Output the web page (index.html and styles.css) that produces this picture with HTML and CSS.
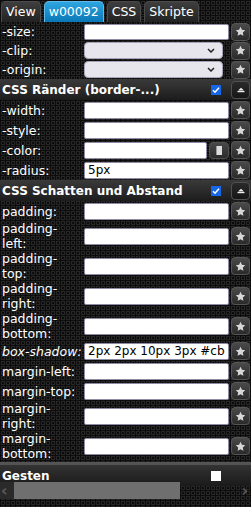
FILE: index.html
```html
<!DOCTYPE html>
<html lang="de">
<head>
<meta charset="utf-8">
<title>Editor</title>
<link rel="stylesheet" href="styles.css">
</head>
<body>
<nav class="tabs">
  <span class="tab">View</span>
  <span class="tab active">w00092</span>
  <span class="tab">CSS</span>
  <span class="tab">Skripte</span>
</nav>

<section class="group">
  <div class="row tight"><label>-size:</label><input type="text"><button class="star"><svg viewBox="0 0 12 12"><path d="M6 .8l1.55 3.3 3.6.45-2.65 2.5.68 3.57L6 8.9 2.82 10.62l.68-3.57L.85 4.55l3.6-.45z"/></svg></button></div>
  <div class="row tight"><label>-clip:</label><div class="sel"><select><option></option></select><svg viewBox="0 0 8 5"><path d="M1 1l3 3 3-3"/></svg></div><button class="star"><svg viewBox="0 0 12 12"><path d="M6 .8l1.55 3.3 3.6.45-2.65 2.5.68 3.57L6 8.9 2.82 10.62l.68-3.57L.85 4.55l3.6-.45z"/></svg></button></div>
  <div class="row tight"><label>-origin:</label><div class="sel"><select><option></option></select><svg viewBox="0 0 8 5"><path d="M1 1l3 3 3-3"/></svg></div><button class="star"><svg viewBox="0 0 12 12"><path d="M6 .8l1.55 3.3 3.6.45-2.65 2.5.68 3.57L6 8.9 2.82 10.62l.68-3.57L.85 4.55l3.6-.45z"/></svg></button></div>
</section>

<header class="head">
  <span class="title">CSS Ränder (border-...)</span>
  <span class="check on"><svg viewBox="0 0 10 10"><path d="M2 5.2l2 2 4-4.4"/></svg></span>
  <button class="fold"><svg viewBox="0 0 10 8"><path d="M2 4.5L5 1.8 8 4.5z"/><rect x="1.5" y="5" width="7" height="1.2"/></svg></button>
</header>
<section class="group">
  <div class="row"><label>-width:</label><input type="text"><button class="star"><svg viewBox="0 0 12 12"><path d="M6 .8l1.55 3.3 3.6.45-2.65 2.5.68 3.57L6 8.9 2.82 10.62l.68-3.57L.85 4.55l3.6-.45z"/></svg></button></div>
  <div class="row"><label>-style:</label><input type="text"><button class="star"><svg viewBox="0 0 12 12"><path d="M6 .8l1.55 3.3 3.6.45-2.65 2.5.68 3.57L6 8.9 2.82 10.62l.68-3.57L.85 4.55l3.6-.45z"/></svg></button></div>
  <div class="row"><label>-color:</label><div class="colorpair"><input type="text"><button class="pick"><span class="swatch"></span></button></div><button class="star"><svg viewBox="0 0 12 12"><path d="M6 .8l1.55 3.3 3.6.45-2.65 2.5.68 3.57L6 8.9 2.82 10.62l.68-3.57L.85 4.55l3.6-.45z"/></svg></button></div>
  <div class="row"><label>-radius:</label><input type="text" value="5px"><button class="star"><svg viewBox="0 0 12 12"><path d="M6 .8l1.55 3.3 3.6.45-2.65 2.5.68 3.57L6 8.9 2.82 10.62l.68-3.57L.85 4.55l3.6-.45z"/></svg></button></div>
</section>

<header class="head">
  <span class="title">CSS Schatten und Abstand</span>
  <span class="check on"><svg viewBox="0 0 10 10"><path d="M2 5.2l2 2 4-4.4"/></svg></span>
  <button class="fold"><svg viewBox="0 0 10 8"><path d="M2 4.5L5 1.8 8 4.5z"/><rect x="1.5" y="5" width="7" height="1.2"/></svg></button>
</header>
<section class="group">
  <div class="row"><label>padding:</label><input type="text"><button class="star"><svg viewBox="0 0 12 12"><path d="M6 .8l1.55 3.3 3.6.45-2.65 2.5.68 3.57L6 8.9 2.82 10.62l.68-3.57L.85 4.55l3.6-.45z"/></svg></button></div>
  <div class="row two"><label>padding-<br>left:</label><input type="text"><button class="star"><svg viewBox="0 0 12 12"><path d="M6 .8l1.55 3.3 3.6.45-2.65 2.5.68 3.57L6 8.9 2.82 10.62l.68-3.57L.85 4.55l3.6-.45z"/></svg></button></div>
  <div class="row two"><label>padding-<br>top:</label><input type="text"><button class="star"><svg viewBox="0 0 12 12"><path d="M6 .8l1.55 3.3 3.6.45-2.65 2.5.68 3.57L6 8.9 2.82 10.62l.68-3.57L.85 4.55l3.6-.45z"/></svg></button></div>
  <div class="row two"><label>padding-<br>right:</label><input type="text"><button class="star"><svg viewBox="0 0 12 12"><path d="M6 .8l1.55 3.3 3.6.45-2.65 2.5.68 3.57L6 8.9 2.82 10.62l.68-3.57L.85 4.55l3.6-.45z"/></svg></button></div>
  <div class="row two"><label>padding-<br>bottom:</label><input type="text"><button class="star"><svg viewBox="0 0 12 12"><path d="M6 .8l1.55 3.3 3.6.45-2.65 2.5.68 3.57L6 8.9 2.82 10.62l.68-3.57L.85 4.55l3.6-.45z"/></svg></button></div>
  <div class="row"><label class="em">box-shadow:</label><input type="text" value="2px 2px 10px 3px #cbcbcb"><button class="star"><svg viewBox="0 0 12 12"><path d="M6 .8l1.55 3.3 3.6.45-2.65 2.5.68 3.57L6 8.9 2.82 10.62l.68-3.57L.85 4.55l3.6-.45z"/></svg></button></div>
  <div class="row"><label>margin-left:</label><input type="text"><button class="star"><svg viewBox="0 0 12 12"><path d="M6 .8l1.55 3.3 3.6.45-2.65 2.5.68 3.57L6 8.9 2.82 10.62l.68-3.57L.85 4.55l3.6-.45z"/></svg></button></div>
  <div class="row"><label>margin-top:</label><input type="text"><button class="star"><svg viewBox="0 0 12 12"><path d="M6 .8l1.55 3.3 3.6.45-2.65 2.5.68 3.57L6 8.9 2.82 10.62l.68-3.57L.85 4.55l3.6-.45z"/></svg></button></div>
  <div class="row two"><label>margin-<br>right:</label><input type="text"><button class="star"><svg viewBox="0 0 12 12"><path d="M6 .8l1.55 3.3 3.6.45-2.65 2.5.68 3.57L6 8.9 2.82 10.62l.68-3.57L.85 4.55l3.6-.45z"/></svg></button></div>
  <div class="row two"><label>margin-<br>bottom:</label><input type="text"><button class="star"><svg viewBox="0 0 12 12"><path d="M6 .8l1.55 3.3 3.6.45-2.65 2.5.68 3.57L6 8.9 2.82 10.62l.68-3.57L.85 4.55l3.6-.45z"/></svg></button></div>
</section>

<div class="sep"></div>
<header class="head last">
  <span class="title">Gesten</span>
  <span class="check off"></span>
  <span class="fold-space"></span>
</header>

<div class="hscroll">
  <span class="arrow left">‹</span>
  <span class="thumb"></span>
  <span class="arrow right">›</span>
</div>
</body>
</html>
```

FILE: styles.css
```css
html, body {
  margin: 0;
  padding: 0;
}
body {
  width: 251px;
  height: 507px;
  overflow: hidden;
  position: relative;
  font-family: "DejaVu Sans", Verdana, sans-serif;
  font-size: 12.5px;
  color: #fff;
  background-color: #0b0b0b;
  background-image: radial-gradient(circle at 3px 3px, transparent 1.1px, #262626 1.5px, #262626 2.2px, transparent 2.6px);
  background-size: 5px 5px;
}

/* tabs */
.tabs {
  display: flex;
  gap: 3px;
  height: 22px;
  padding: 1px 0 0 1px;
  box-sizing: border-box;
}
.tab {
  height: 21px;
  line-height: 20px;
  padding: 0 4px;
  border: 1px solid #4a4a4a;
  border-bottom: none;
  border-radius: 5px 5px 0 0;
  background: linear-gradient(#3e3e3e, #222);
  color: #fff;
  font-size: 12.5px;
  box-sizing: border-box;
}
.tab.active {
  background: linear-gradient(#2ea6e0, #0a77b6);
  border-color: #62b8e6;
}

/* rows */
.row {
  display: grid;
  grid-template-columns: 82px 1fr 19px;
  column-gap: 2px;
  align-items: center;
  height: 20px;
  padding-right: 1px;
}
.row.tight { height: 19px; }
.row.two { height: 30px; }
.row label {
  padding-left: 2px;
  white-space: nowrap;
  line-height: 15px;
}
.row label.em { font-style: italic; }

input[type="text"] {
  height: 17px;
  box-sizing: border-box;
  width: 100%;
  margin: 0;
  border: 1px solid #8e8ca4;
  border-radius: 2px;
  background: #fff;
  padding: 0 3px;
  font-family: "DejaVu Sans", Verdana, sans-serif;
  font-size: 12px;
  color: #000;
  outline: none;
}
.row.tight input[type="text"] { height: 16px; }

.sel {
  position: relative;
  margin-right: 6px;
  height: 17px;
}
.sel select {
  appearance: none;
  -webkit-appearance: none;
  width: 100%;
  height: 17px;
  margin: 0;
  border: 1px solid #a6a4b6;
  border-radius: 4px;
  background: #e7e6ec;
  font-size: 12px;
}
.sel svg {
  position: absolute;
  right: 8px;
  top: 6px;
  width: 8px;
  height: 5px;
  fill: none;
  stroke: #222;
  stroke-width: 1.5;
}

.colorpair {
  display: flex;
  gap: 2px;
  align-items: center;
}
.colorpair input[type="text"] { flex: 1; min-width: 0; }
.pick {
  width: 20px;
  height: 17px;
  flex: none;
  margin: 0;
  padding: 0;
  border: 1px solid #505050;
  border-radius: 4px;
  background: linear-gradient(#484848, #2c2c2c);
  display: flex;
  align-items: center;
  justify-content: center;
}
.swatch {
  width: 6px;
  height: 9px;
  background: linear-gradient(90deg, #999 0 1px, #ddd 1px);
}

.star {
  width: 19px;
  height: 18px;
  margin: 0;
  padding: 0;
  border: 1px solid #555;
  border-radius: 4px;
  background: linear-gradient(#4a4a4a, #2a2a2a);
  display: flex;
  align-items: center;
  justify-content: center;
}
.star svg {
  width: 11px;
  height: 11px;
  fill: #d8d8d8;
}

/* section headers */
.head {
  display: flex;
  align-items: center;
  height: 21px;
  padding-left: 2px;
  padding-right: 1px;
  background: linear-gradient(#3a3a3a, #1c1c1c);
  font-weight: bold;
  font-size: 12px;
}
.head .title { flex: 1; white-space: nowrap; }
.check {
  width: 10px;
  height: 10px;
  margin-right: 10px;
  flex: none;
  box-sizing: border-box;
}
.check.on {
  background: #1667e6;
  display: flex;
}
.check.on svg {
  width: 10px;
  height: 10px;
  fill: none;
  stroke: #fff;
  stroke-width: 1.6;
}
.check.off { background: #fff; }
.fold {
  width: 19px;
  height: 18px;
  margin: 0;
  padding: 0;
  border: 1px solid #505050;
  border-radius: 4px;
  background: linear-gradient(#2a2a2a, #161616);
  display: flex;
  align-items: center;
  justify-content: center;
}
.fold svg {
  width: 10px;
  height: 8px;
  fill: #eee;
}
.fold-space { width: 19px; }

.sep {
  height: 3px;
  margin-top: 1px;
  background: #545454;
}
.head.last {
  background: linear-gradient(#333, #1a1a1a);
}

/* horizontal scrollbar overlay */
.hscroll {
  position: absolute;
  left: 0;
  right: 0;
  top: 482px;
  height: 17px;
  display: flex;
  align-items: center;
}
.arrow {
  color: #5a5a5a;
  font-size: 16px;
  line-height: 17px;
  font-weight: bold;
}
.arrow.left {
  width: 14px;
  height: 17px;
  padding-left: 1px;
  box-sizing: border-box;
  background: #2a2a2a;
}
.thumb {
  width: 166px;
  height: 17px;
  background: #6f6f6f;
}
.arrow.right {
  margin-left: auto;
  margin-right: 3px;
}
```
